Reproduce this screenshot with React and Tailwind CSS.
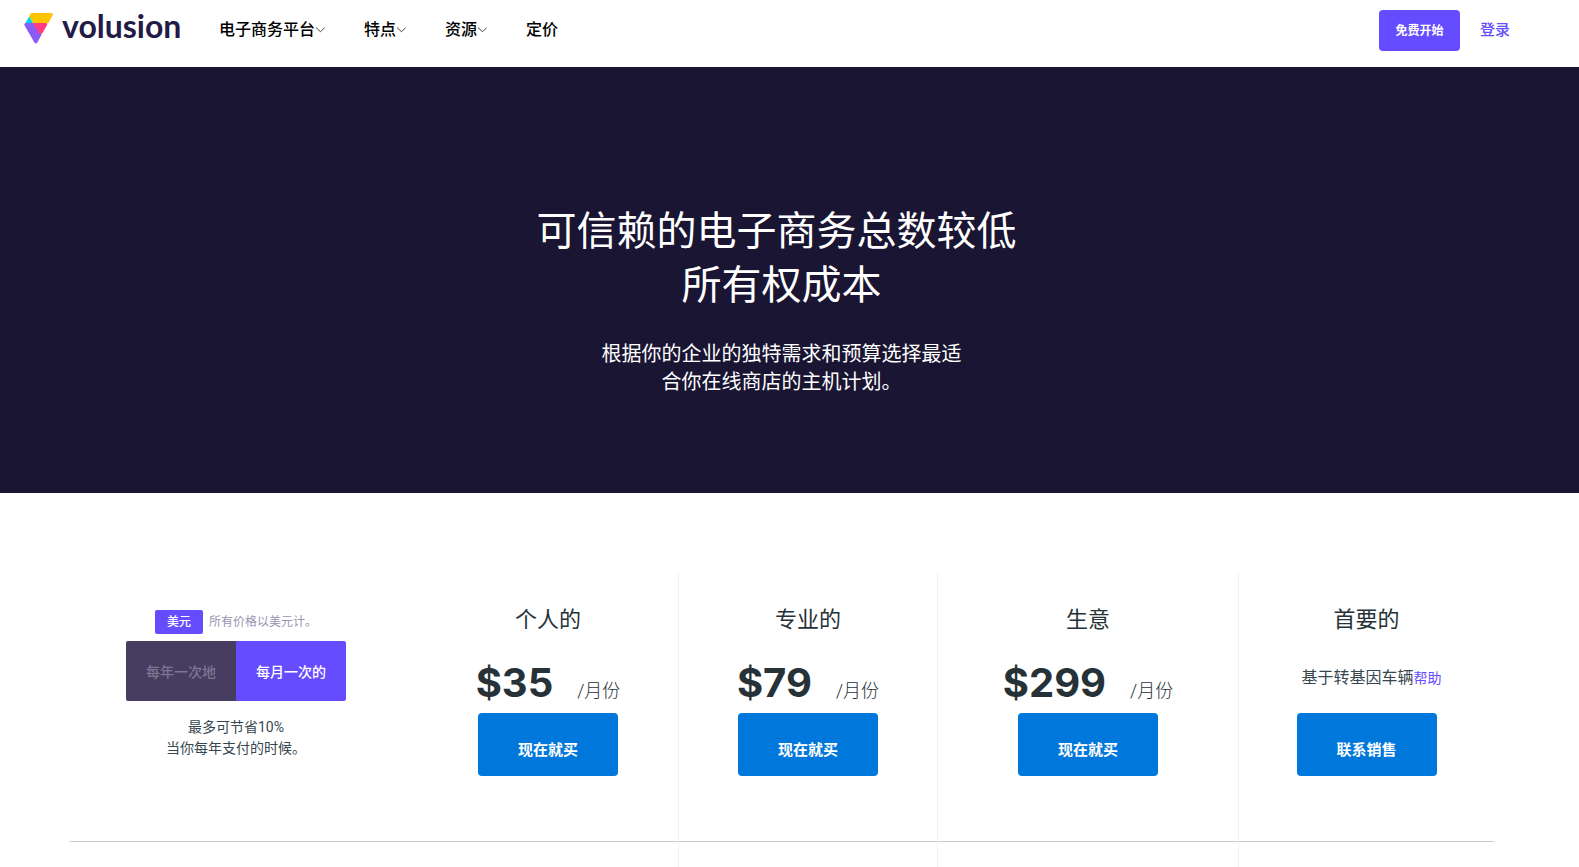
import React from "react";

const navItems = [
  { label: "电子商务平台", hasMenu: true },
  { label: "特点", hasMenu: true },
  { label: "资源", hasMenu: true },
  { label: "定价", hasMenu: false },
];

const plans = [
  { name: "个人的", price: "$35", action: "现在就买" },
  { name: "专业的", price: "$79", action: "现在就买" },
  { name: "生意", price: "$299", action: "现在就买" },
  { name: "首要的", price: null, action: "联系销售" },
];

const Logo = () => (
  <a href="#" className="flex items-center gap-[9px]" aria-label="volusion">
    <svg width="29" height="31" viewBox="0 0 29 31">
      <path d="M8 0H27.4Q29.6 0 28.6 2.2L24.4 10H9.2L5.2 3.4L6.2 1.3Q6.8 0 8 0Z" fill="#ffc400" />
      <path d="M5.2 3.4L9.2 10H1.4Z" fill="#00d4e6" />
      <path d="M1.4 10H9.2L16.6 20.8H18L13.4 29.4Q12 31.6 10.4 29.4L0.6 12.6Q-0.2 11 1.4 10Z" fill="#8a5cf6" />
      <path d="M8.8 10H22.2Q24 10 23.2 11.8L18.8 19.4Q16.6 22.4 14.4 19.6Z" fill="#ff3d81" />
    </svg>
    <span className="pb-1 font-['Lato',sans-serif] text-[32px] leading-7 font-bold text-[#231b45]">
      volusion
    </span>
  </a>
);

const Chevron = () => (
  <svg width="10" height="6" viewBox="0 0 10 6" fill="none">
    <path d="M1 0.5L5.5 4.8L9.8 0.5" stroke="#444" />
  </svg>
);

const Header = () => (
  <header className="flex h-[67px] items-start pl-6 pr-[69px] pt-[10px]">
    <div className="flex h-9 w-[195px] items-center">
      <Logo />
    </div>
    <nav className="flex h-[39px] items-center gap-[39px]">
      {navItems.map((item) => (
        <a key={item.label} href="#" className="flex items-center text-base font-medium text-black">
          {item.label}
          {item.hasMenu && <Chevron />}
        </a>
      ))}
    </nav>
    <div className="ml-auto flex items-center gap-5">
      <button className="h-[41px] w-[81px] rounded bg-[#664cff] text-xs font-bold text-white">
        免费开始
      </button>
      <a href="#" className="text-[15px] font-medium text-[#664cff]">
        登录
      </a>
    </div>
  </header>
);

const Hero = () => (
  <section className="bg-[#1a1532] pt-[138px] pr-4 pb-[97px] text-center text-white">
    <h1 className="text-[40px] leading-[54px]">
      可信赖的电子商务总数较低&nbsp;
      <br />
      所有权成本
    </h1>
    <p className="mt-[27px] text-xl leading-7">
      根据你的企业的独特需求和预算选择最适
      <br />
      合你在线商店的主机计划。
    </p>
  </section>
);

const Billing = () => (
  <div className="flex flex-col items-center pr-4 pt-[37px]">
    <div className="flex items-center gap-[6px] text-xs">
      <span className="flex h-6 w-12 items-center justify-center rounded-xs bg-[#664cff] font-medium text-white">
        美元
      </span>
      <span className="text-[#9a93b3]">所有价格以美元计。</span>
    </div>
    <div className="mt-[7px] flex overflow-hidden rounded-xs text-sm font-medium">
      <button className="h-[60px] w-[110px] bg-[#463d61] pt-0.5 text-[#7d7691]">每年一次地</button>
      <button className="h-[60px] w-[110px] bg-[#664cff] pt-0.5 text-white">每月一次的</button>
    </div>
    <p className="mt-4 text-center text-sm leading-[21px] text-[#37474f]">
      最多可节省10%
      <br />
      当你每年支付的时候。
    </p>
  </div>
);

const Plan = ({ plan }) => (
  <div className="flex flex-col items-center pt-8">
    <h2 className="text-[22px] leading-[30px] text-[#263238]">{plan.name}</h2>
    {plan.price ? (
      <p className="flex h-[78px] items-baseline gap-6 pt-[18px] text-[#263238]">
        <span className="font-['Inter',sans-serif] text-[40px] leading-[60px] font-bold">
          {plan.price}
        </span>
        <span className="text-lg font-light">/月份</span>
      </p>
    ) : (
      <p className="h-[78px] pl-[10px] pt-[31px] text-base text-[#37474f]">
        基于转基因车辆
        <a href="#" className="text-sm text-[#664cff]">
          帮助
        </a>
      </p>
    )}
    <button className="h-[63px] w-[140px] rounded bg-[#0077db] pt-3 text-[15px] font-bold text-white">
      {plan.action}
    </button>
  </div>
);

const Pricing = () => (
  <section className="pt-20 pr-[85px] pl-[70px]">
    <table className="w-full table-fixed border-separate border-spacing-0">
      <colgroup>
        <col className="w-[348px]" />
        <col className="w-[261px]" />
        <col className="w-[259px]" />
        <col className="w-[301px]" />
        <col className="w-[255px]" />
      </colgroup>
      <tbody>
        <tr>
          <td className="h-[269px] border-b border-[#ccc] p-0 align-top">
            <Billing />
          </td>
          {plans.map((plan) => (
            <td
              key={plan.name}
              className="border-r border-b border-r-[#f1f1f8] border-b-[#ccc] p-0 align-top last:border-r-0"
            >
              <Plan plan={plan} />
            </td>
          ))}
        </tr>
        <tr>
          <td className="h-[25px] p-0" />
          {plans.map((plan) => (
            <td key={plan.name} className="border-r border-[#f1f1f8] p-0 last:border-r-0" />
          ))}
        </tr>
      </tbody>
    </table>
  </section>
);

const App = () => (
  <div
    lang="zh-CN"
    className="min-h-screen bg-white font-['Roboto','Noto_Sans_CJK_SC',sans-serif]"
  >
    <Header />
    <main>
      <Hero />
      <Pricing />
    </main>
  </div>
);

export default App;
